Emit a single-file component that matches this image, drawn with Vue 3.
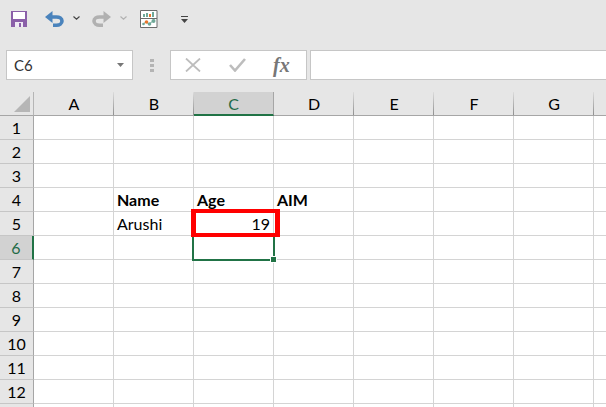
<template>
  <div class="app">
    <div class="quick-bar">
      <svg class="ico save" width="16" height="16" viewBox="0 0 16 16">
        <path fill="#8a5fa8" d="M0 0h16v16H0z" />
        <path fill="#fff" d="M2 1h12v7H2z" />
        <path fill="#efe9f4" d="M4 11h8v5H4z" />
        <path fill="#8a5fa8" d="M8 12h2v4H8z" />
      </svg>
      <svg class="ico undo" width="19" height="16" viewBox="0 0 19 16">
        <path fill="none" stroke="#4a83bc" stroke-width="3.600" d="M3 6h8.500c3 0 5.500 1.400 5.500 3.900s-2.500 4.300-5.500 4.300H8" />
        <path fill="#4a83bc" d="M7.500 0v12L0 6z" />
      </svg>
      <svg class="ico chev" width="7" height="4" viewBox="0 0 7 4">
        <path fill="none" stroke="#444" stroke-width="1.200" d="M.5.500l3 2.600 3-2.600" />
      </svg>
      <svg class="ico redo" width="19" height="16" viewBox="0 0 19 16">
        <path fill="none" stroke="#b1b1b1" stroke-width="3.600" d="M16 6H7.500c-3 0-5.500 1.400-5.500 3.900s2.500 4.300 5.500 4.300H11" />
        <path fill="#b1b1b1" d="M11.500 0v12L19 6z" />
      </svg>
      <svg class="ico chev chev-off" width="7" height="4" viewBox="0 0 7 4">
        <path fill="none" stroke="#b1b1b1" stroke-width="1.200" d="M.5.500l3 2.600 3-2.600" />
      </svg>
      <svg class="ico chart" width="18" height="18" viewBox="0 0 18 18">
        <path fill="#fff" stroke="#6b6b6b" d="M.5.500h16.500v17H.5z" />
        <path stroke="#6b6b6b" d="M1 8.500h16" />
        <path fill="#6fa898" d="M3 4h2v3H3zM6 3h2v4H6zM12 2h2v5h-2z" />
        <path fill="#e8762c" d="M9 4h2v3H9z" />
        <path fill="none" stroke="#6fa898" d="M3 14l3-2 3 2 4-3 2-1" />
        <circle cx="3.500" cy="14" r="1.300" fill="#6fa898" />
        <circle cx="6.500" cy="12" r="1.800" fill="#e8762c" />
        <circle cx="9.500" cy="14" r="1.800" fill="#6fa898" />
        <circle cx="13.500" cy="11" r="2" fill="#6fa898" />
      </svg>
      <svg class="ico more" width="7" height="7" viewBox="0 0 7 7">
        <path fill="#444" d="M0 0h7v1H0zM0 3h7L3.500 7z" />
      </svg>
    </div>

    <div class="formula-bar">
      <div class="name-box">
        <span>C6</span>
        <svg width="7" height="4" viewBox="0 0 7 4"><path fill="#777" d="M0 0h7L3.500 4z" /></svg>
      </div>
      <div class="grip"><i></i><i></i><i></i></div>
      <div class="fx-box">
        <svg width="16" height="14" viewBox="0 0 16 14">
          <path fill="none" stroke="#bdbdbd" stroke-width="1.800" d="M1 .500l14 13M15 .500l-14 13" />
        </svg>
        <svg width="17" height="14" viewBox="0 0 17 14">
          <path fill="none" stroke="#bdbdbd" stroke-width="2.600" d="M1 7l5 5.500L16 1" />
        </svg>
        <span class="fx">fx</span>
      </div>
      <div class="formula-input"></div>
    </div>

    <div class="sheet">
      <div class="head-row">
        <div class="corner"><span class="corner-tri"></span></div>
        <div
          v-for="col in columns"
          :key="col"
          class="col-head"
          :class="{ active: col === 'C' }"
        >
          {{ col }}
        </div>
      </div>
      <div v-for="row in rows" :key="row" class="row">
        <div class="row-head" :class="{ active: row === 6 }">{{ row }}</div>
        <div v-for="col in columns" :key="col" class="cell" :class="cellClass(col, row)">
          {{ cellText(col, row) }}
        </div>
      </div>

      <div class="selection"><span class="handle"></span></div>
      <div class="red-box"></div>
    </div>
  </div>
</template>

<script setup>
// last column and row only peek in at the window edge, so they stay unlabelled
const columns = ["A", "B", "C", "D", "E", "F", "G", ""];
const rows = [1, 2, 3, 4, 5, 6, 7, 8, 9, 10, 11, 12, ""];

const cells = {
  B4: "Name",
  C4: "Age",
  D4: "AIM",
  B5: "Arushi",
  C5: "19",
};

const cellText = (col, row) => cells[col + row] || "";

const cellClass = (col, row) => ({
  bold: row === 4,
  num: col === "C" && row === 5,
});
</script>

<style scoped>
.app {
  width: 606px;
  height: 407px;
  overflow: hidden;
  background: #e6e6e6;
  font-family: Lato, "Liberation Sans", sans-serif;
  color: #000;
}

.quick-bar {
  display: flex;
  align-items: flex-start;
  height: 50px;
  box-sizing: border-box;
  padding: 11px 0 0 11px;
}

.ico {
  flex-shrink: 0;
}

.undo {
  margin-left: 18px;
}

.chev {
  margin: 5px 0 0 9px;
}

.redo {
  margin-left: 12px;
}

.chart {
  margin: -1px 0 0 13px;
}

.more {
  margin: 5px 0 0 23px;
}

.formula-bar {
  display: flex;
  height: 30px;
}

.name-box {
  display: flex;
  align-items: center;
  justify-content: space-between;
  width: 127px;
  margin-left: 6px;
  padding: 0 8px 0 7px;
  box-sizing: border-box;
  background: #fff;
  border: 1px solid #c6c6c6;
  font-size: 15px;
  color: #333;
}

.grip {
  display: flex;
  flex-direction: column;
  justify-content: center;
  gap: 2px;
  width: 37px;
  padding-left: 17px;
  box-sizing: border-box;
}

.grip i {
  width: 4px;
  height: 3px;
  background: #b4b4b4;
}

.fx-box {
  display: flex;
  align-items: center;
  width: 137px;
  padding-left: 14px;
  box-sizing: border-box;
  background: #fff;
  border: 1px solid #c6c6c6;
  gap: 28px;
}

.fx {
  font-family: "Liberation Serif", serif;
  font-style: italic;
  font-weight: bold;
  font-size: 20px;
  color: #777;
  margin-left: -1px;
}

.formula-input {
  flex: 1;
  margin-left: 3px;
  background: #fff;
  border: 1px solid #c6c6c6;
  border-right: none;
}

.sheet {
  position: relative;
  margin-top: 12px;
}

.head-row {
  display: flex;
  height: 24px;
}

.corner {
  display: flex;
  justify-content: flex-end;
  align-items: flex-end;
  width: 34px;
  flex-shrink: 0;
  box-sizing: border-box;
  padding: 0 3px 3px 0;
  border-right: 1px solid #b5b5b5;
  border-bottom: 1px solid #a6a6a6;
}

.corner-tri {
  width: 0;
  height: 0;
  border-left: 16px solid transparent;
  border-bottom: 16px solid #b6b6b6;
}

.col-head {
  width: 80px;
  flex-shrink: 0;
  box-sizing: border-box;
  background: linear-gradient(#dcdcdc, #8f8f8f) right top / 1px 100% no-repeat;
  border-bottom: 1px solid #a6a6a6;
  text-align: center;
  font-size: 16px;
  line-height: 23px;
}

.col-head.active {
  background: #d2d2d2;
  border-right: 1px solid #a6a6a6;
  border-bottom: 2px solid #217346;
  color: #1f6b47;
}

.row {
  display: flex;
  height: 24px;
}

.row-head {
  width: 34px;
  flex-shrink: 0;
  box-sizing: border-box;
  border-right: 1px solid #a6a6a6;
  border-bottom: 1px solid #c6c6c6;
  text-align: center;
  font-size: 16px;
  line-height: 23px;
}

.row-head.active {
  background: #d2d2d2;
  border-right: 2px solid #217346;
  color: #1f6b47;
}

.cell {
  width: 80px;
  flex-shrink: 0;
  box-sizing: border-box;
  padding: 0 3px;
  background: #fff;
  border-right: 1px solid #d4d4d4;
  border-bottom: 1px solid #d4d4d4;
  font-size: 16px;
  line-height: 24px;
  white-space: nowrap;
}

.cell.bold {
  font-weight: bold;
}

.cell.num {
  text-align: right;
}

.selection {
  position: absolute;
  left: 192px;
  top: 143px;
  width: 83px;
  height: 26px;
  box-sizing: border-box;
  border: 2px solid #217346;
}

.handle {
  position: absolute;
  right: -4px;
  bottom: -4px;
  width: 5px;
  height: 5px;
  background: #217346;
  border: 1px solid #fff;
}

.red-box {
  position: absolute;
  left: 191px;
  top: 117px;
  width: 89px;
  height: 28px;
  box-sizing: border-box;
  border-style: solid;
  border-color: #f00;
  border-width: 4px 5px;
}
</style>
